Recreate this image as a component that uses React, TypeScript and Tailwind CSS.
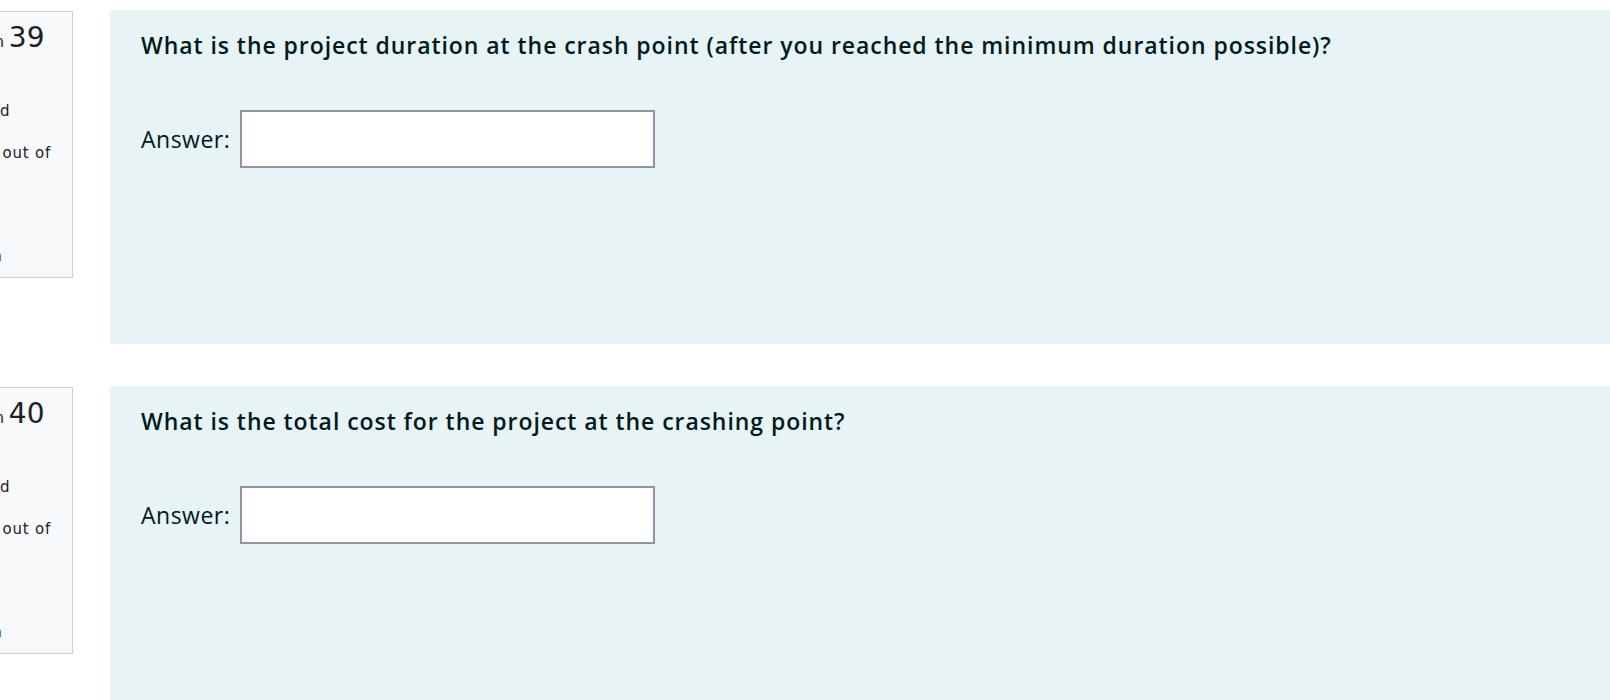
import React from 'react';

interface QuestionProps {
  no: number;
  text: string;
  panelClass: string;
}

const Question: React.FC<QuestionProps> = ({ no, text, panelClass }) => {
  return (
    <div className="flex items-start ml-[-70px]">
      {/* info card, mostly scrolled off to the left */}
      <div className="w-[143px] h-[267px] mt-[1px] shrink-0 border border-[#cad0d7] bg-[#f8f9fa] pl-[6px] pr-[8px] pt-[10px] text-[#1d2125] font-['DejaVu_Sans',sans-serif] text-[15px]">
        <h3 className="leading-[32px] whitespace-nowrap">
          Question <span className="text-[28px]">{no}</span>
        </h3>
        <div className="mt-[22px] leading-[21px] whitespace-nowrap">
          <div>Not yet</div>
          <div>answered</div>
        </div>
        <div className="mt-[21px] leading-[21px] whitespace-nowrap">
          <div className="tracking-[0.8px]">Marked out of</div>
          <div>1.00</div>
        </div>
        <div className="mt-[40px] leading-[21px] whitespace-nowrap">
          <div>Flag</div>
          <div>question</div>
        </div>
      </div>

      {/* formulation */}
      <div className={`ml-[37px] flex-1 bg-[#e7f3f5] px-[31px] pt-[21px] text-[#001a1e] font-['Open_Sans',sans-serif] ${panelClass}`}>
        <p className="text-[23px] leading-[29px] font-semibold tracking-[0.94px] whitespace-nowrap">{text}</p>
        <div className="mt-[50px] flex items-center gap-[10px]">
          <label className="text-[23px] leading-[30px] tracking-[0.5px]">Answer:</label>
          <input
            type="text"
            className="w-[415px] h-[58px] bg-white border-2 border-[#8f959e] px-3 text-[18px] outline-none"
          />
        </div>
      </div>
    </div>
  );
};

export default function App() {
  return (
    <div className="w-[1610px] h-[700px] overflow-hidden bg-white pt-[10px]">
      <Question
        no={39}
        text="What is the project duration at the crash point (after you reached the minimum duration possible)?"
        panelClass="h-[334px]"
      />
      <div className="mt-[42px]">
        <Question
          no={40}
          text="What is the total cost for the project at the crashing point?"
          panelClass="h-[400px]"
        />
      </div>
    </div>
  );
}
